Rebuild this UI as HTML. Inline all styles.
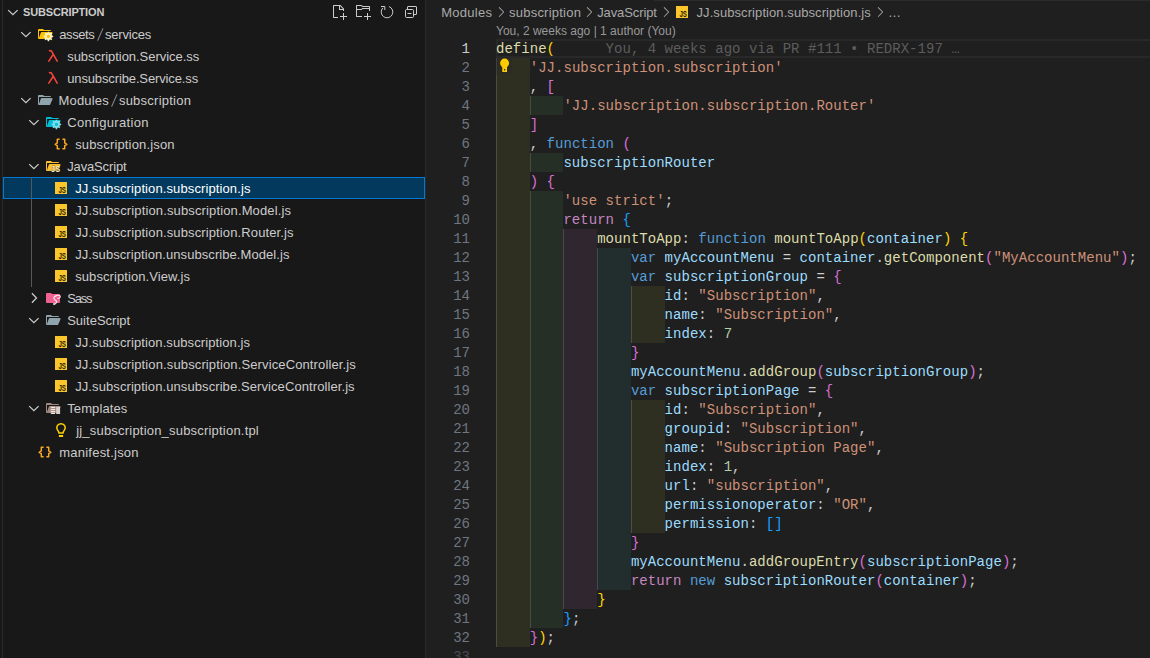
<!DOCTYPE html>
<html><head><meta charset="utf-8"><style>
html,body{margin:0;padding:0;width:1150px;height:658px;overflow:hidden;background:#1f1f1f}
*{box-sizing:border-box}
#side{position:absolute;left:0;top:0;width:426px;height:658px;background:#181818;border-right:1px solid #2b2b2b}
.lborder{position:absolute;left:2px;top:0;width:1px;height:658px;background:#2b2b2b}
.hdr{position:absolute;left:23px;top:1px;letter-spacing:-0.16px;font:bold 11px "Liberation Sans",sans-serif;line-height:22px;color:#cccccc;white-space:nowrap}
.sel{position:absolute;left:3px;top:177px;width:422px;height:22px;background:#04395e;border:1px solid #0078d4}
.tguide{position:absolute;left:31px;top:177px;width:1px;height:110px;background:#585858}
.tguide2{position:absolute;left:31px;top:177px;width:1px;height:22px;background:#585858}
.lb{position:absolute;font:13px "Liberation Sans",sans-serif;line-height:22px;color:#cccccc;white-space:nowrap}
.sl{padding:0 1px;color:#9d9d9d}
#ed{position:absolute;left:426px;top:0;width:724px;height:658px;background:#1f1f1f}
.bc{position:absolute;top:2px;font:13px "Liberation Sans",sans-serif;line-height:22px;color:#a9a9a9;white-space:nowrap}
.lens{position:absolute;left:496px;top:23px;font:12px "Liberation Sans",sans-serif;line-height:17px;color:#999999;white-space:nowrap}
.ir{position:absolute;height:19px}
.ig{position:absolute;width:1px;height:19px;background:#404040}
.ln{position:absolute;left:430px;width:40px;text-align:right;height:19px;font:14px "Liberation Mono",monospace;line-height:19px;color:#6e7681}
.ln.act{color:#cccccc}
.cl{position:absolute;height:19px;font:14px "Liberation Mono",monospace;line-height:19px;white-space:pre;letter-spacing:0.03px}
.curline{position:absolute;left:496px;top:39px;width:654px;height:19px;border:2px solid #282828;border-right:none}
.blame{position:absolute;left:605.6px;top:40px;font:14px "Liberation Mono",monospace;line-height:19px;color:#5c5c5c;white-space:pre;letter-spacing:0.03px}
</style></head><body>
<div id="side"></div>
<div class="lborder"></div>
<div class="sel"></div>
<div class="tguide"></div>
<svg style="position:absolute;left:0;top:0" width="426" height="658" viewBox="0 0 426 658">
<path transform="translate(5,4)" d="M3.2 6.1 L7.9 10.7 L12.6 6.1" fill="none" stroke="#cccccc" stroke-width="1.25"/>
<path transform="translate(331,4)" d="M9.5 1.1l3.4 3.5.1.4v2h-1V6H8V2H3v11h4v1H2.5l-.5-.5v-12l.5-.5h6.7l.3.1zM9 2v3h2.9L9 2zm4 14h-1v-3H9v-1h3V9h1v3h3v1h-3v3z" fill="#cccccc"/>
<path transform="translate(355,4)" d="M14.5 2H7.71l-.85-.85L6.51 1h-5l-.5.5v11l.5.5H7v-1H1.99V6h4.49l.35-.15.86-.86H14v1.5l-.001.51h1.011V2.5L14.5 2zm-.51 2h-6.5l-.35.15-.86.86H2v-3h4.29l.85.85.36.15H14l-.01.99zM13 16h-1v-3H9v-1h3V9h1v3h3v1h-3v3z" fill="#cccccc"/>
<path d="M389 6.55 A5.8 5.8 0 1 1 382.9 7.9" fill="none" stroke="#cccccc" stroke-width="1"/>
<path d="M381 6.5 H384.8 V10" fill="none" stroke="#cccccc" stroke-width="1"/>
<path d="M407.5 9 V7 Q407.5 6.5 408 6.5 H416 Q416.5 6.5 416.5 7 V14 Q416.5 14.5 416 14.5 H414" fill="none" stroke="#cccccc" stroke-width="1"/>
<rect x="405.5" y="9.5" width="8" height="8" rx="1" fill="none" stroke="#cccccc" stroke-width="1"/>
<path d="M407.5 13.5 H411.5" stroke="#cccccc" stroke-width="1"/>

<line x1="103" y1="28.4" x2="97.6" y2="40.6" stroke="#8a8a8a" stroke-width="1.1"/>
<line x1="117" y1="94.4" x2="111.6" y2="106.6" stroke="#8a8a8a" stroke-width="1.1"/>
<path transform="translate(18,26)" d="M3.2 6.1 L7.9 10.7 L12.6 6.1" fill="none" stroke="#cccccc" stroke-width="1.25"/>
<g transform="translate(37,26)"><g transform="scale(.5)"><path d="M28.967 12H9.442a2 2 0 0 0-1.898 1.368L4 24V10h24a2 2 0 0 0-2-2H15.124a2 2 0 0 1-1.28-.464l-1.288-1.072A2 2 0 0 0 11.276 6H4a2 2 0 0 0-2 2v16a2 2 0 0 0 2 2h22l4.805-11.212A2 2 0 0 0 28.967 12" fill="#ffc107"/></g><path d="M14.73 9.02 L14.90 9.56 L16.14 9.65 L16.14 11.15 L14.90 11.24 L14.73 11.78 L14.47 12.28 L15.28 13.22 L14.22 14.28 L13.28 13.47 L12.78 13.73 L12.24 13.90 L12.15 15.14 L10.65 15.14 L10.56 13.90 L10.02 13.73 L9.52 13.47 L8.58 14.28 L7.52 13.22 L8.33 12.28 L8.07 11.78 L7.90 11.24 L6.66 11.15 L6.66 9.65 L7.90 9.56 L8.07 9.02 L8.33 8.52 L7.52 7.58 L8.58 6.52 L9.52 7.33 L10.02 7.07 L10.56 6.90 L10.65 5.66 L12.15 5.66 L12.24 6.90 L12.78 7.07 L13.28 7.33 L14.22 6.52 L15.28 7.58 L14.47 8.52Z" fill="#fff6c2"/><circle cx="11.4" cy="10.4" r="1.6" fill="#ffc107"/></g>
<g transform="translate(45,48)"><path d="M4.5 2.7 C6.0 2.4 6.8 3.2 7.4 4.6 L12.2 13.1 M7.8 7.0 L3.8 13.1" fill="none" stroke="#f4443a" stroke-width="1.6" stroke-linecap="round"/></g>
<g transform="translate(45,70)"><path d="M4.5 2.7 C6.0 2.4 6.8 3.2 7.4 4.6 L12.2 13.1 M7.8 7.0 L3.8 13.1" fill="none" stroke="#f4443a" stroke-width="1.6" stroke-linecap="round"/></g>
<path transform="translate(18,92)" d="M3.2 6.1 L7.9 10.7 L12.6 6.1" fill="none" stroke="#cccccc" stroke-width="1.25"/>
<g transform="translate(37,92)"><g transform="scale(.5)"><path d="M28.967 12H9.442a2 2 0 0 0-1.898 1.368L4 24V10h24a2 2 0 0 0-2-2H15.124a2 2 0 0 1-1.28-.464l-1.288-1.072A2 2 0 0 0 11.276 6H4a2 2 0 0 0-2 2v16a2 2 0 0 0 2 2h22l4.805-11.212A2 2 0 0 0 28.967 12" fill="#90a4ae"/></g></g>
<path transform="translate(26,114)" d="M3.2 6.1 L7.9 10.7 L12.6 6.1" fill="none" stroke="#cccccc" stroke-width="1.25"/>
<g transform="translate(45,114)"><g transform="scale(.5)"><path d="M28.967 12H9.442a2 2 0 0 0-1.898 1.368L4 24V10h24a2 2 0 0 0-2-2H15.124a2 2 0 0 1-1.28-.464l-1.288-1.072A2 2 0 0 0 11.276 6H4a2 2 0 0 0-2 2v16a2 2 0 0 0 2 2h22l4.805-11.212A2 2 0 0 0 28.967 12" fill="#00bcd4"/></g><path d="M14.73 9.02 L14.90 9.56 L16.14 9.65 L16.14 11.15 L14.90 11.24 L14.73 11.78 L14.47 12.28 L15.28 13.22 L14.22 14.28 L13.28 13.47 L12.78 13.73 L12.24 13.90 L12.15 15.14 L10.65 15.14 L10.56 13.90 L10.02 13.73 L9.52 13.47 L8.58 14.28 L7.52 13.22 L8.33 12.28 L8.07 11.78 L7.90 11.24 L6.66 11.15 L6.66 9.65 L7.90 9.56 L8.07 9.02 L8.33 8.52 L7.52 7.58 L8.58 6.52 L9.52 7.33 L10.02 7.07 L10.56 6.90 L10.65 5.66 L12.15 5.66 L12.24 6.90 L12.78 7.07 L13.28 7.33 L14.22 6.52 L15.28 7.58 L14.47 8.52Z" fill="#80deea"/><circle cx="11.4" cy="10.4" r="1.6" fill="#00bcd4"/></g>
<g transform="translate(53,136)"><path d="M6.6 3.3 H4.3 V6.9 L2.2 8.3 L4.3 9.7 V12.7 H6.6 M9.4 3.3 H11.7 V6.9 L13.8 8.3 L11.7 9.7 V12.7 H9.4" fill="none" stroke="#f9a825" stroke-width="1.5" stroke-linejoin="round"/></g>
<path transform="translate(26,158)" d="M3.2 6.1 L7.9 10.7 L12.6 6.1" fill="none" stroke="#cccccc" stroke-width="1.25"/>
<g transform="translate(45,158)"><g transform="scale(.5)"><path d="M28.967 12H9.442a2 2 0 0 0-1.898 1.368L4 24V10h24a2 2 0 0 0-2-2H15.124a2 2 0 0 1-1.28-.464l-1.288-1.072A2 2 0 0 0 11.276 6H4a2 2 0 0 0-2 2v16a2 2 0 0 0 2 2h22l4.805-11.212A2 2 0 0 0 28.967 12" fill="#fbc02d"/></g><text x="6.1" y="13.9" font-family="Liberation Sans" font-size="8.2" fill="#fff6cc" font-weight="bold" stroke="#1a1a1a" stroke-width="0.5" paint-order="stroke" textLength="8.9" lengthAdjust="spacingAndGlyphs">JS</text></g>
<g transform="translate(53,180)"><rect x="2" y="2" width="12" height="12" fill="#fbc52c"/><text x="5.4" y="12.9" font-family="Liberation Sans" font-size="8.2" fill="#262200" font-weight="bold" textLength="7.5" lengthAdjust="spacingAndGlyphs">JS</text></g>
<g transform="translate(53,202)"><rect x="2" y="2" width="12" height="12" fill="#fbc52c"/><text x="5.4" y="12.9" font-family="Liberation Sans" font-size="8.2" fill="#262200" font-weight="bold" textLength="7.5" lengthAdjust="spacingAndGlyphs">JS</text></g>
<g transform="translate(53,224)"><rect x="2" y="2" width="12" height="12" fill="#fbc52c"/><text x="5.4" y="12.9" font-family="Liberation Sans" font-size="8.2" fill="#262200" font-weight="bold" textLength="7.5" lengthAdjust="spacingAndGlyphs">JS</text></g>
<g transform="translate(53,246)"><rect x="2" y="2" width="12" height="12" fill="#fbc52c"/><text x="5.4" y="12.9" font-family="Liberation Sans" font-size="8.2" fill="#262200" font-weight="bold" textLength="7.5" lengthAdjust="spacingAndGlyphs">JS</text></g>
<g transform="translate(53,268)"><rect x="2" y="2" width="12" height="12" fill="#fbc52c"/><text x="5.4" y="12.9" font-family="Liberation Sans" font-size="8.2" fill="#262200" font-weight="bold" textLength="7.5" lengthAdjust="spacingAndGlyphs">JS</text></g>
<path transform="translate(26,290)" d="M5.9 3.3 L10.5 8 L5.9 12.7" fill="none" stroke="#cccccc" stroke-width="1.25"/>
<g transform="translate(45,290)"><g transform="scale(.5)"><path d="M13.844 7.536l-1.288-1.072A2 2 0 0 0 11.276 6H4a2 2 0 0 0-2 2v16a2 2 0 0 0 2 2h24a2 2 0 0 0 2-2V10a2 2 0 0 0-2-2H15.124a2 2 0 0 1-1.28-.464" fill="#f06292"/></g><path d="M15.3 6.3 C14.6 4.6 10.2 5.0 8.9 7.6 C8.0 9.6 11.6 9.9 11.6 11.6 C11.6 13.0 10.2 14.2 9.2 14.3 C8.4 14.4 8.6 13.6 9.4 13.3" fill="none" stroke="#fde7ef" stroke-width="1.2"/><path d="M15.3 6.3 C15.8 7.6 13.5 8.6 12.4 8.4" fill="none" stroke="#fde7ef" stroke-width="1.1"/></g>
<path transform="translate(26,312)" d="M3.2 6.1 L7.9 10.7 L12.6 6.1" fill="none" stroke="#cccccc" stroke-width="1.25"/>
<g transform="translate(45,312)"><g transform="scale(.5)"><path d="M28.967 12H9.442a2 2 0 0 0-1.898 1.368L4 24V10h24a2 2 0 0 0-2-2H15.124a2 2 0 0 1-1.28-.464l-1.288-1.072A2 2 0 0 0 11.276 6H4a2 2 0 0 0-2 2v16a2 2 0 0 0 2 2h22l4.805-11.212A2 2 0 0 0 28.967 12" fill="#90a4ae"/></g></g>
<g transform="translate(53,334)"><rect x="2" y="2" width="12" height="12" fill="#fbc52c"/><text x="5.4" y="12.9" font-family="Liberation Sans" font-size="8.2" fill="#262200" font-weight="bold" textLength="7.5" lengthAdjust="spacingAndGlyphs">JS</text></g>
<g transform="translate(53,356)"><rect x="2" y="2" width="12" height="12" fill="#fbc52c"/><text x="5.4" y="12.9" font-family="Liberation Sans" font-size="8.2" fill="#262200" font-weight="bold" textLength="7.5" lengthAdjust="spacingAndGlyphs">JS</text></g>
<g transform="translate(53,378)"><rect x="2" y="2" width="12" height="12" fill="#fbc52c"/><text x="5.4" y="12.9" font-family="Liberation Sans" font-size="8.2" fill="#262200" font-weight="bold" textLength="7.5" lengthAdjust="spacingAndGlyphs">JS</text></g>
<path transform="translate(26,400)" d="M3.2 6.1 L7.9 10.7 L12.6 6.1" fill="none" stroke="#cccccc" stroke-width="1.25"/>
<g transform="translate(45,400)"><g transform="scale(.5)"><path d="M28.967 12H9.442a2 2 0 0 0-1.898 1.368L4 24V10h24a2 2 0 0 0-2-2H15.124a2 2 0 0 1-1.28-.464l-1.288-1.072A2 2 0 0 0 11.276 6H4a2 2 0 0 0-2 2v16a2 2 0 0 0 2 2h22l4.805-11.212A2 2 0 0 0 28.967 12" fill="#a1887f"/></g><rect x="5.6" y="6.7" width="10" height="7.6" fill="#181818" opacity="0"/><rect x="5.8" y="6.8" width="4.3" height="1.2" fill="#efe6e2"/><rect x="5.8" y="8.9" width="4.3" height="1.2" fill="#efe6e2"/><rect x="5.8" y="10.9" width="4.3" height="1.2" fill="#efe6e2"/><rect x="5.8" y="12.8" width="4.3" height="1.2" fill="#efe6e2"/><rect x="11.2" y="6.8" width="3.9" height="7.2" fill="#dcd0cc"/></g>
<g transform="translate(53,422)"><path d="M8 1.7 C5.3 1.7 3.8 3.7 3.8 5.8 C3.8 7.3 4.6 8.3 5.3 9.2 C5.8 9.9 6.0 10.4 6.0 11.0 L10 11.0 C10 10.4 10.2 9.9 10.7 9.2 C11.4 8.3 12.2 7.3 12.2 5.8 C12.2 3.7 10.7 1.7 8 1.7Z" fill="none" stroke="#ffcf00" stroke-width="1.5"/><rect x="5.9" y="13" width="4.2" height="2" fill="#ffcf00"/></g>
<g transform="translate(37,444)"><path d="M6.6 3.3 H4.3 V6.9 L2.2 8.3 L4.3 9.7 V12.7 H6.6 M9.4 3.3 H11.7 V6.9 L13.8 8.3 L11.7 9.7 V12.7 H9.4" fill="none" stroke="#f9a825" stroke-width="1.5" stroke-linejoin="round"/></g>
</svg>
<div class="hdr">SUBSCRIPTION</div>
<div class="lb" style="left:59.3px;top:24px;letter-spacing:-0.414px;color:#cccccc">assets</div>
<div class="lb" style="left:105px;top:24px;letter-spacing:-0.197px;color:#cccccc">services</div>
<div class="lb" style="left:67.2px;top:46px;letter-spacing:-0.043px;color:#cccccc">subscription.Service.ss</div>
<div class="lb" style="left:67.2px;top:68px;letter-spacing:-0.127px;color:#cccccc">unsubscribe.Service.ss</div>
<div class="lb" style="left:58.6px;top:90px;letter-spacing:0.16px;color:#cccccc">Modules</div>
<div class="lb" style="left:118.9px;top:90px;letter-spacing:0.242px;color:#cccccc">subscription</div>
<div class="lb" style="left:67.2px;top:112px;letter-spacing:0.325px;color:#cccccc">Configuration</div>
<div class="lb" style="left:75.2px;top:134px;letter-spacing:0.156px;color:#cccccc">subscription.json</div>
<div class="lb" style="left:67.2px;top:156px;letter-spacing:-0.142px;color:#cccccc">JavaScript</div>
<div class="lb" style="left:75.2px;top:178px;letter-spacing:0.108px;color:#ffffff">JJ.subscription.subscription.js</div>
<div class="lb" style="left:75.2px;top:200px;letter-spacing:0.134px;color:#cccccc">JJ.subscription.subscription.Model.js</div>
<div class="lb" style="left:75.2px;top:222px;letter-spacing:0.122px;color:#cccccc">JJ.subscription.subscription.Router.js</div>
<div class="lb" style="left:75.2px;top:244px;letter-spacing:0.074px;color:#cccccc">JJ.subscription.unsubscribe.Model.js</div>
<div class="lb" style="left:75.2px;top:266px;letter-spacing:0.079px;color:#cccccc">subscription.View.js</div>
<div class="lb" style="left:67.2px;top:288px;letter-spacing:-1.2px;color:#cccccc">Sass</div>
<div class="lb" style="left:67.2px;top:310px;letter-spacing:0.015px;color:#cccccc">SuiteScript</div>
<div class="lb" style="left:75.2px;top:332px;letter-spacing:0.098px;color:#cccccc">JJ.subscription.subscription.js</div>
<div class="lb" style="left:75.2px;top:354px;letter-spacing:0.126px;color:#cccccc">JJ.subscription.subscription.ServiceController.js</div>
<div class="lb" style="left:75.2px;top:376px;letter-spacing:0.088px;color:#cccccc">JJ.subscription.unsubscribe.ServiceController.js</div>
<div class="lb" style="left:67.2px;top:398px;letter-spacing:0.106px;color:#cccccc">Templates</div>
<div class="lb" style="left:76.2px;top:420px;letter-spacing:0.202px;color:#cccccc">jj_subscription_subscription.tpl</div>
<div class="lb" style="left:59.3px;top:442px;letter-spacing:0.22px;color:#cccccc">manifest.json</div>
<div id="ed"></div>
<div style="position:absolute;left:654px;top:0;width:496px;height:1px;background:#2b2b2b"></div>
<div class="bc" style="left:441.3px;letter-spacing:0.244px">Modules</div>
<div class="bc" style="left:509px;letter-spacing:0.233px">subscription</div>
<div class="bc" style="left:597.2px;letter-spacing:-0.109px">JavaScript</div>
<div class="bc" style="left:696.5px;letter-spacing:0.078px">JJ.subscription.subscription.js</div>
<div class="bc" style="left:888px">…</div>
<svg style="position:absolute;left:426px;top:0" width="724" height="22" viewBox="426 0 724 22">
<path transform="translate(493,4)" d="M10.072 8.024L5.715 3.667l.618-.62L11 7.716v.618L6.333 13l-.618-.619 4.357-4.357z" fill="#a9a9a9"/>
<path transform="translate(581,4)" d="M10.072 8.024L5.715 3.667l.618-.62L11 7.716v.618L6.333 13l-.618-.619 4.357-4.357z" fill="#a9a9a9"/>
<path transform="translate(658,4)" d="M10.072 8.024L5.715 3.667l.618-.62L11 7.716v.618L6.333 13l-.618-.619 4.357-4.357z" fill="#a9a9a9"/>
<path transform="translate(872,4)" d="M10.072 8.024L5.715 3.667l.618-.62L11 7.716v.618L6.333 13l-.618-.619 4.357-4.357z" fill="#a9a9a9"/>
<g transform="translate(674,4)"><rect x="2" y="2" width="12" height="12" fill="#fbc52c"/><text x="5.4" y="12.9" font-family="Liberation Sans" font-size="8.2" fill="#262200" font-weight="bold" textLength="7.5" lengthAdjust="spacingAndGlyphs">JS</text></g>
</svg>
<div class="lens">You, 2 weeks ago | 1 author (You)</div>
<div class="curline"></div>
<div class="ir" style="left:496px;top:58px;width:34px;background:#2f2f21"></div>
<div class="ig" style="left:496px;top:58px;background:#4d4d40"></div>
<div class="ir" style="left:496px;top:77px;width:34px;background:#2f2f21"></div>
<div class="ig" style="left:496px;top:77px;background:#4d4d40"></div>
<div class="ir" style="left:496px;top:96px;width:34px;background:#2f2f21"></div>
<div class="ig" style="left:496px;top:96px;background:#4d4d40"></div>
<div class="ir" style="left:530px;top:96px;width:33px;background:#262f26"></div>
<div class="ig" style="left:530px;top:96px;background:#444d44"></div>
<div class="ir" style="left:496px;top:115px;width:34px;background:#2f2f21"></div>
<div class="ig" style="left:496px;top:115px;background:#4d4d40"></div>
<div class="ir" style="left:496px;top:134px;width:34px;background:#2f2f21"></div>
<div class="ig" style="left:496px;top:134px;background:#4d4d40"></div>
<div class="ir" style="left:496px;top:153px;width:34px;background:#2f2f21"></div>
<div class="ig" style="left:496px;top:153px;background:#4d4d40"></div>
<div class="ir" style="left:530px;top:153px;width:33px;background:#262f26"></div>
<div class="ig" style="left:530px;top:153px;background:#444d44"></div>
<div class="ir" style="left:496px;top:172px;width:34px;background:#2f2f21"></div>
<div class="ig" style="left:496px;top:172px;background:#4d4d40"></div>
<div class="ir" style="left:496px;top:191px;width:34px;background:#2f2f21"></div>
<div class="ig" style="left:496px;top:191px;background:#4d4d40"></div>
<div class="ir" style="left:530px;top:191px;width:33px;background:#262f26"></div>
<div class="ig" style="left:530px;top:191px;background:#444d44"></div>
<div class="ir" style="left:496px;top:210px;width:34px;background:#2f2f21"></div>
<div class="ig" style="left:496px;top:210px;background:#4d4d40"></div>
<div class="ir" style="left:530px;top:210px;width:33px;background:#262f26"></div>
<div class="ig" style="left:530px;top:210px;background:#444d44"></div>
<div class="ir" style="left:496px;top:229px;width:34px;background:#2f2f21"></div>
<div class="ig" style="left:496px;top:229px;background:#4d4d40"></div>
<div class="ir" style="left:530px;top:229px;width:33px;background:#262f26"></div>
<div class="ig" style="left:530px;top:229px;background:#444d44"></div>
<div class="ir" style="left:563px;top:229px;width:34px;background:#2f262f"></div>
<div class="ig" style="left:563px;top:229px;background:#4d444d"></div>
<div class="ir" style="left:496px;top:248px;width:34px;background:#2f2f21"></div>
<div class="ig" style="left:496px;top:248px;background:#4d4d40"></div>
<div class="ir" style="left:530px;top:248px;width:33px;background:#262f26"></div>
<div class="ig" style="left:530px;top:248px;background:#444d44"></div>
<div class="ir" style="left:563px;top:248px;width:34px;background:#2f262f"></div>
<div class="ig" style="left:563px;top:248px;background:#4d444d"></div>
<div class="ir" style="left:597px;top:248px;width:34px;background:#222d2d"></div>
<div class="ig" style="left:597px;top:248px;background:#414c4c"></div>
<div class="ir" style="left:496px;top:267px;width:34px;background:#2f2f21"></div>
<div class="ig" style="left:496px;top:267px;background:#4d4d40"></div>
<div class="ir" style="left:530px;top:267px;width:33px;background:#262f26"></div>
<div class="ig" style="left:530px;top:267px;background:#444d44"></div>
<div class="ir" style="left:563px;top:267px;width:34px;background:#2f262f"></div>
<div class="ig" style="left:563px;top:267px;background:#4d444d"></div>
<div class="ir" style="left:597px;top:267px;width:34px;background:#222d2d"></div>
<div class="ig" style="left:597px;top:267px;background:#414c4c"></div>
<div class="ir" style="left:496px;top:286px;width:34px;background:#2f2f21"></div>
<div class="ig" style="left:496px;top:286px;background:#4d4d40"></div>
<div class="ir" style="left:530px;top:286px;width:33px;background:#262f26"></div>
<div class="ig" style="left:530px;top:286px;background:#444d44"></div>
<div class="ir" style="left:563px;top:286px;width:34px;background:#2f262f"></div>
<div class="ig" style="left:563px;top:286px;background:#4d444d"></div>
<div class="ir" style="left:597px;top:286px;width:34px;background:#222d2d"></div>
<div class="ig" style="left:597px;top:286px;background:#414c4c"></div>
<div class="ir" style="left:631px;top:286px;width:34px;background:#2f2f21"></div>
<div class="ig" style="left:631px;top:286px;background:#4d4d40"></div>
<div class="ir" style="left:496px;top:305px;width:34px;background:#2f2f21"></div>
<div class="ig" style="left:496px;top:305px;background:#4d4d40"></div>
<div class="ir" style="left:530px;top:305px;width:33px;background:#262f26"></div>
<div class="ig" style="left:530px;top:305px;background:#444d44"></div>
<div class="ir" style="left:563px;top:305px;width:34px;background:#2f262f"></div>
<div class="ig" style="left:563px;top:305px;background:#4d444d"></div>
<div class="ir" style="left:597px;top:305px;width:34px;background:#222d2d"></div>
<div class="ig" style="left:597px;top:305px;background:#414c4c"></div>
<div class="ir" style="left:631px;top:305px;width:34px;background:#2f2f21"></div>
<div class="ig" style="left:631px;top:305px;background:#4d4d40"></div>
<div class="ir" style="left:496px;top:324px;width:34px;background:#2f2f21"></div>
<div class="ig" style="left:496px;top:324px;background:#4d4d40"></div>
<div class="ir" style="left:530px;top:324px;width:33px;background:#262f26"></div>
<div class="ig" style="left:530px;top:324px;background:#444d44"></div>
<div class="ir" style="left:563px;top:324px;width:34px;background:#2f262f"></div>
<div class="ig" style="left:563px;top:324px;background:#4d444d"></div>
<div class="ir" style="left:597px;top:324px;width:34px;background:#222d2d"></div>
<div class="ig" style="left:597px;top:324px;background:#414c4c"></div>
<div class="ir" style="left:631px;top:324px;width:34px;background:#2f2f21"></div>
<div class="ig" style="left:631px;top:324px;background:#4d4d40"></div>
<div class="ir" style="left:496px;top:343px;width:34px;background:#2f2f21"></div>
<div class="ig" style="left:496px;top:343px;background:#4d4d40"></div>
<div class="ir" style="left:530px;top:343px;width:33px;background:#262f26"></div>
<div class="ig" style="left:530px;top:343px;background:#444d44"></div>
<div class="ir" style="left:563px;top:343px;width:34px;background:#2f262f"></div>
<div class="ig" style="left:563px;top:343px;background:#4d444d"></div>
<div class="ir" style="left:597px;top:343px;width:34px;background:#222d2d"></div>
<div class="ig" style="left:597px;top:343px;background:#414c4c"></div>
<div class="ir" style="left:496px;top:362px;width:34px;background:#2f2f21"></div>
<div class="ig" style="left:496px;top:362px;background:#4d4d40"></div>
<div class="ir" style="left:530px;top:362px;width:33px;background:#262f26"></div>
<div class="ig" style="left:530px;top:362px;background:#444d44"></div>
<div class="ir" style="left:563px;top:362px;width:34px;background:#2f262f"></div>
<div class="ig" style="left:563px;top:362px;background:#4d444d"></div>
<div class="ir" style="left:597px;top:362px;width:34px;background:#222d2d"></div>
<div class="ig" style="left:597px;top:362px;background:#414c4c"></div>
<div class="ir" style="left:496px;top:381px;width:34px;background:#2f2f21"></div>
<div class="ig" style="left:496px;top:381px;background:#4d4d40"></div>
<div class="ir" style="left:530px;top:381px;width:33px;background:#262f26"></div>
<div class="ig" style="left:530px;top:381px;background:#444d44"></div>
<div class="ir" style="left:563px;top:381px;width:34px;background:#2f262f"></div>
<div class="ig" style="left:563px;top:381px;background:#4d444d"></div>
<div class="ir" style="left:597px;top:381px;width:34px;background:#222d2d"></div>
<div class="ig" style="left:597px;top:381px;background:#414c4c"></div>
<div class="ir" style="left:496px;top:400px;width:34px;background:#2f2f21"></div>
<div class="ig" style="left:496px;top:400px;background:#4d4d40"></div>
<div class="ir" style="left:530px;top:400px;width:33px;background:#262f26"></div>
<div class="ig" style="left:530px;top:400px;background:#444d44"></div>
<div class="ir" style="left:563px;top:400px;width:34px;background:#2f262f"></div>
<div class="ig" style="left:563px;top:400px;background:#4d444d"></div>
<div class="ir" style="left:597px;top:400px;width:34px;background:#222d2d"></div>
<div class="ig" style="left:597px;top:400px;background:#414c4c"></div>
<div class="ir" style="left:631px;top:400px;width:34px;background:#2f2f21"></div>
<div class="ig" style="left:631px;top:400px;background:#4d4d40"></div>
<div class="ir" style="left:496px;top:419px;width:34px;background:#2f2f21"></div>
<div class="ig" style="left:496px;top:419px;background:#4d4d40"></div>
<div class="ir" style="left:530px;top:419px;width:33px;background:#262f26"></div>
<div class="ig" style="left:530px;top:419px;background:#444d44"></div>
<div class="ir" style="left:563px;top:419px;width:34px;background:#2f262f"></div>
<div class="ig" style="left:563px;top:419px;background:#4d444d"></div>
<div class="ir" style="left:597px;top:419px;width:34px;background:#222d2d"></div>
<div class="ig" style="left:597px;top:419px;background:#414c4c"></div>
<div class="ir" style="left:631px;top:419px;width:34px;background:#2f2f21"></div>
<div class="ig" style="left:631px;top:419px;background:#4d4d40"></div>
<div class="ir" style="left:496px;top:438px;width:34px;background:#2f2f21"></div>
<div class="ig" style="left:496px;top:438px;background:#4d4d40"></div>
<div class="ir" style="left:530px;top:438px;width:33px;background:#262f26"></div>
<div class="ig" style="left:530px;top:438px;background:#444d44"></div>
<div class="ir" style="left:563px;top:438px;width:34px;background:#2f262f"></div>
<div class="ig" style="left:563px;top:438px;background:#4d444d"></div>
<div class="ir" style="left:597px;top:438px;width:34px;background:#222d2d"></div>
<div class="ig" style="left:597px;top:438px;background:#414c4c"></div>
<div class="ir" style="left:631px;top:438px;width:34px;background:#2f2f21"></div>
<div class="ig" style="left:631px;top:438px;background:#4d4d40"></div>
<div class="ir" style="left:496px;top:457px;width:34px;background:#2f2f21"></div>
<div class="ig" style="left:496px;top:457px;background:#4d4d40"></div>
<div class="ir" style="left:530px;top:457px;width:33px;background:#262f26"></div>
<div class="ig" style="left:530px;top:457px;background:#444d44"></div>
<div class="ir" style="left:563px;top:457px;width:34px;background:#2f262f"></div>
<div class="ig" style="left:563px;top:457px;background:#4d444d"></div>
<div class="ir" style="left:597px;top:457px;width:34px;background:#222d2d"></div>
<div class="ig" style="left:597px;top:457px;background:#414c4c"></div>
<div class="ir" style="left:631px;top:457px;width:34px;background:#2f2f21"></div>
<div class="ig" style="left:631px;top:457px;background:#4d4d40"></div>
<div class="ir" style="left:496px;top:476px;width:34px;background:#2f2f21"></div>
<div class="ig" style="left:496px;top:476px;background:#4d4d40"></div>
<div class="ir" style="left:530px;top:476px;width:33px;background:#262f26"></div>
<div class="ig" style="left:530px;top:476px;background:#444d44"></div>
<div class="ir" style="left:563px;top:476px;width:34px;background:#2f262f"></div>
<div class="ig" style="left:563px;top:476px;background:#4d444d"></div>
<div class="ir" style="left:597px;top:476px;width:34px;background:#222d2d"></div>
<div class="ig" style="left:597px;top:476px;background:#414c4c"></div>
<div class="ir" style="left:631px;top:476px;width:34px;background:#2f2f21"></div>
<div class="ig" style="left:631px;top:476px;background:#4d4d40"></div>
<div class="ir" style="left:496px;top:495px;width:34px;background:#2f2f21"></div>
<div class="ig" style="left:496px;top:495px;background:#4d4d40"></div>
<div class="ir" style="left:530px;top:495px;width:33px;background:#262f26"></div>
<div class="ig" style="left:530px;top:495px;background:#444d44"></div>
<div class="ir" style="left:563px;top:495px;width:34px;background:#2f262f"></div>
<div class="ig" style="left:563px;top:495px;background:#4d444d"></div>
<div class="ir" style="left:597px;top:495px;width:34px;background:#222d2d"></div>
<div class="ig" style="left:597px;top:495px;background:#414c4c"></div>
<div class="ir" style="left:631px;top:495px;width:34px;background:#2f2f21"></div>
<div class="ig" style="left:631px;top:495px;background:#4d4d40"></div>
<div class="ir" style="left:496px;top:514px;width:34px;background:#2f2f21"></div>
<div class="ig" style="left:496px;top:514px;background:#4d4d40"></div>
<div class="ir" style="left:530px;top:514px;width:33px;background:#262f26"></div>
<div class="ig" style="left:530px;top:514px;background:#444d44"></div>
<div class="ir" style="left:563px;top:514px;width:34px;background:#2f262f"></div>
<div class="ig" style="left:563px;top:514px;background:#4d444d"></div>
<div class="ir" style="left:597px;top:514px;width:34px;background:#222d2d"></div>
<div class="ig" style="left:597px;top:514px;background:#414c4c"></div>
<div class="ir" style="left:631px;top:514px;width:34px;background:#2f2f21"></div>
<div class="ig" style="left:631px;top:514px;background:#4d4d40"></div>
<div class="ir" style="left:496px;top:533px;width:34px;background:#2f2f21"></div>
<div class="ig" style="left:496px;top:533px;background:#4d4d40"></div>
<div class="ir" style="left:530px;top:533px;width:33px;background:#262f26"></div>
<div class="ig" style="left:530px;top:533px;background:#444d44"></div>
<div class="ir" style="left:563px;top:533px;width:34px;background:#2f262f"></div>
<div class="ig" style="left:563px;top:533px;background:#4d444d"></div>
<div class="ir" style="left:597px;top:533px;width:34px;background:#222d2d"></div>
<div class="ig" style="left:597px;top:533px;background:#414c4c"></div>
<div class="ir" style="left:496px;top:552px;width:34px;background:#2f2f21"></div>
<div class="ig" style="left:496px;top:552px;background:#4d4d40"></div>
<div class="ir" style="left:530px;top:552px;width:33px;background:#262f26"></div>
<div class="ig" style="left:530px;top:552px;background:#444d44"></div>
<div class="ir" style="left:563px;top:552px;width:34px;background:#2f262f"></div>
<div class="ig" style="left:563px;top:552px;background:#4d444d"></div>
<div class="ir" style="left:597px;top:552px;width:34px;background:#222d2d"></div>
<div class="ig" style="left:597px;top:552px;background:#414c4c"></div>
<div class="ir" style="left:496px;top:571px;width:34px;background:#2f2f21"></div>
<div class="ig" style="left:496px;top:571px;background:#4d4d40"></div>
<div class="ir" style="left:530px;top:571px;width:33px;background:#262f26"></div>
<div class="ig" style="left:530px;top:571px;background:#444d44"></div>
<div class="ir" style="left:563px;top:571px;width:34px;background:#2f262f"></div>
<div class="ig" style="left:563px;top:571px;background:#4d444d"></div>
<div class="ir" style="left:597px;top:571px;width:34px;background:#222d2d"></div>
<div class="ig" style="left:597px;top:571px;background:#414c4c"></div>
<div class="ir" style="left:496px;top:590px;width:34px;background:#2f2f21"></div>
<div class="ig" style="left:496px;top:590px;background:#4d4d40"></div>
<div class="ir" style="left:530px;top:590px;width:33px;background:#262f26"></div>
<div class="ig" style="left:530px;top:590px;background:#444d44"></div>
<div class="ir" style="left:563px;top:590px;width:34px;background:#2f262f"></div>
<div class="ig" style="left:563px;top:590px;background:#4d444d"></div>
<div class="ir" style="left:496px;top:609px;width:34px;background:#2f2f21"></div>
<div class="ig" style="left:496px;top:609px;background:#4d4d40"></div>
<div class="ir" style="left:530px;top:609px;width:33px;background:#262f26"></div>
<div class="ig" style="left:530px;top:609px;background:#444d44"></div>
<div class="ir" style="left:496px;top:628px;width:34px;background:#2f2f21"></div>
<div class="ig" style="left:496px;top:628px;background:#4d4d40"></div>
<div class="ln act" style="top:40px">1</div>
<div class="cl" style="top:40px;left:496.0px"><span style="color:#dcdcaa">define</span><span style="color:#ffd700">(</span></div>
<div class="ln" style="top:59px">2</div>
<div class="cl" style="top:59px;left:529.72px"><span style="color:#ce9178">&#x27;JJ.subscription.subscription&#x27;</span></div>
<div class="ln" style="top:78px">3</div>
<div class="cl" style="top:78px;left:529.72px"><span style="color:#cccccc">, </span><span style="color:#da70d6">[</span></div>
<div class="ln" style="top:97px">4</div>
<div class="cl" style="top:97px;left:563.44px"><span style="color:#ce9178">&#x27;JJ.subscription.subscription.Router&#x27;</span></div>
<div class="ln" style="top:116px">5</div>
<div class="cl" style="top:116px;left:529.72px"><span style="color:#da70d6">]</span></div>
<div class="ln" style="top:135px">6</div>
<div class="cl" style="top:135px;left:529.72px"><span style="color:#cccccc">, </span><span style="color:#569cd6">function</span><span style="color:#cccccc"> </span><span style="color:#da70d6">(</span></div>
<div class="ln" style="top:154px">7</div>
<div class="cl" style="top:154px;left:563.44px"><span style="color:#9cdcfe">subscriptionRouter</span></div>
<div class="ln" style="top:173px">8</div>
<div class="cl" style="top:173px;left:529.72px"><span style="color:#da70d6">)</span><span style="color:#cccccc"> </span><span style="color:#da70d6">{</span></div>
<div class="ln" style="top:192px">9</div>
<div class="cl" style="top:192px;left:563.44px"><span style="color:#ce9178">&#x27;use strict&#x27;</span><span style="color:#cccccc">;</span></div>
<div class="ln" style="top:211px">10</div>
<div class="cl" style="top:211px;left:563.44px"><span style="color:#c586c0">return</span><span style="color:#cccccc"> </span><span style="color:#179fff">{</span></div>
<div class="ln" style="top:230px">11</div>
<div class="cl" style="top:230px;left:597.16px"><span style="color:#dcdcaa">mountToApp</span><span style="color:#cccccc">: </span><span style="color:#569cd6">function</span><span style="color:#cccccc"> </span><span style="color:#dcdcaa">mountToApp</span><span style="color:#ffd700">(</span><span style="color:#9cdcfe">container</span><span style="color:#ffd700">)</span><span style="color:#cccccc"> </span><span style="color:#ffd700">{</span></div>
<div class="ln" style="top:249px">12</div>
<div class="cl" style="top:249px;left:630.88px"><span style="color:#569cd6">var</span><span style="color:#cccccc"> </span><span style="color:#9cdcfe">myAccountMenu</span><span style="color:#cccccc"> = </span><span style="color:#9cdcfe">container</span><span style="color:#cccccc">.</span><span style="color:#dcdcaa">getComponent</span><span style="color:#da70d6">(</span><span style="color:#ce9178">&quot;MyAccountMenu&quot;</span><span style="color:#da70d6">)</span><span style="color:#cccccc">;</span></div>
<div class="ln" style="top:268px">13</div>
<div class="cl" style="top:268px;left:630.88px"><span style="color:#569cd6">var</span><span style="color:#cccccc"> </span><span style="color:#9cdcfe">subscriptionGroup</span><span style="color:#cccccc"> = </span><span style="color:#da70d6">{</span></div>
<div class="ln" style="top:287px">14</div>
<div class="cl" style="top:287px;left:664.6px"><span style="color:#9cdcfe">id</span><span style="color:#cccccc">: </span><span style="color:#ce9178">&quot;Subscription&quot;</span><span style="color:#cccccc">,</span></div>
<div class="ln" style="top:306px">15</div>
<div class="cl" style="top:306px;left:664.6px"><span style="color:#9cdcfe">name</span><span style="color:#cccccc">: </span><span style="color:#ce9178">&quot;Subscription&quot;</span><span style="color:#cccccc">,</span></div>
<div class="ln" style="top:325px">16</div>
<div class="cl" style="top:325px;left:664.6px"><span style="color:#9cdcfe">index</span><span style="color:#cccccc">: </span><span style="color:#b5cea8">7</span></div>
<div class="ln" style="top:344px">17</div>
<div class="cl" style="top:344px;left:630.88px"><span style="color:#da70d6">}</span></div>
<div class="ln" style="top:363px">18</div>
<div class="cl" style="top:363px;left:630.88px"><span style="color:#9cdcfe">myAccountMenu</span><span style="color:#cccccc">.</span><span style="color:#dcdcaa">addGroup</span><span style="color:#da70d6">(</span><span style="color:#9cdcfe">subscriptionGroup</span><span style="color:#da70d6">)</span><span style="color:#cccccc">;</span></div>
<div class="ln" style="top:382px">19</div>
<div class="cl" style="top:382px;left:630.88px"><span style="color:#569cd6">var</span><span style="color:#cccccc"> </span><span style="color:#9cdcfe">subscriptionPage</span><span style="color:#cccccc"> = </span><span style="color:#da70d6">{</span></div>
<div class="ln" style="top:401px">20</div>
<div class="cl" style="top:401px;left:664.6px"><span style="color:#9cdcfe">id</span><span style="color:#cccccc">: </span><span style="color:#ce9178">&quot;Subscription&quot;</span><span style="color:#cccccc">,</span></div>
<div class="ln" style="top:420px">21</div>
<div class="cl" style="top:420px;left:664.6px"><span style="color:#9cdcfe">groupid</span><span style="color:#cccccc">: </span><span style="color:#ce9178">&quot;Subscription&quot;</span><span style="color:#cccccc">,</span></div>
<div class="ln" style="top:439px">22</div>
<div class="cl" style="top:439px;left:664.6px"><span style="color:#9cdcfe">name</span><span style="color:#cccccc">: </span><span style="color:#ce9178">&quot;Subscription Page&quot;</span><span style="color:#cccccc">,</span></div>
<div class="ln" style="top:458px">23</div>
<div class="cl" style="top:458px;left:664.6px"><span style="color:#9cdcfe">index</span><span style="color:#cccccc">: </span><span style="color:#b5cea8">1</span><span style="color:#cccccc">,</span></div>
<div class="ln" style="top:477px">24</div>
<div class="cl" style="top:477px;left:664.6px"><span style="color:#9cdcfe">url</span><span style="color:#cccccc">: </span><span style="color:#ce9178">&quot;subscription&quot;</span><span style="color:#cccccc">,</span></div>
<div class="ln" style="top:496px">25</div>
<div class="cl" style="top:496px;left:664.6px"><span style="color:#9cdcfe">permissionoperator</span><span style="color:#cccccc">: </span><span style="color:#ce9178">&quot;OR&quot;</span><span style="color:#cccccc">,</span></div>
<div class="ln" style="top:515px">26</div>
<div class="cl" style="top:515px;left:664.6px"><span style="color:#9cdcfe">permission</span><span style="color:#cccccc">: </span><span style="color:#179fff">[]</span></div>
<div class="ln" style="top:534px">27</div>
<div class="cl" style="top:534px;left:630.88px"><span style="color:#da70d6">}</span></div>
<div class="ln" style="top:553px">28</div>
<div class="cl" style="top:553px;left:630.88px"><span style="color:#9cdcfe">myAccountMenu</span><span style="color:#cccccc">.</span><span style="color:#dcdcaa">addGroupEntry</span><span style="color:#da70d6">(</span><span style="color:#9cdcfe">subscriptionPage</span><span style="color:#da70d6">)</span><span style="color:#cccccc">;</span></div>
<div class="ln" style="top:572px">29</div>
<div class="cl" style="top:572px;left:630.88px"><span style="color:#c586c0">return</span><span style="color:#cccccc"> </span><span style="color:#569cd6">new</span><span style="color:#cccccc"> </span><span style="color:#9cdcfe">subscriptionRouter</span><span style="color:#da70d6">(</span><span style="color:#9cdcfe">container</span><span style="color:#da70d6">)</span><span style="color:#cccccc">;</span></div>
<div class="ln" style="top:591px">30</div>
<div class="cl" style="top:591px;left:597.16px"><span style="color:#ffd700">}</span></div>
<div class="ln" style="top:610px">31</div>
<div class="cl" style="top:610px;left:563.44px"><span style="color:#179fff">}</span><span style="color:#cccccc">;</span></div>
<div class="ln" style="top:629px">32</div>
<div class="cl" style="top:629px;left:529.72px"><span style="color:#da70d6">}</span><span style="color:#ffd700">)</span><span style="color:#cccccc">;</span></div>
<div class="ln" style="top:648px;color:#464c55">33</div>
<svg style="position:absolute;left:494px;top:56px" width="22" height="20" viewBox="494 56 22 20"><rect x="497" y="58" width="15" height="15.6" fill="#2c2c22"/><rect x="496" y="58" width="1" height="18" fill="#404040"/><circle cx="504.6" cy="63.1" r="4.5" fill="#ffcc00"/><path d="M502.3 66.5 H507 V72 H502.3Z M504 69 V70.6 H505.2 V69Z" fill="#ffcc00" fill-rule="evenodd"/></svg>
<div class="blame">You, 4 weeks ago via PR #111 • REDRX-197 …</div>
</body></html>
